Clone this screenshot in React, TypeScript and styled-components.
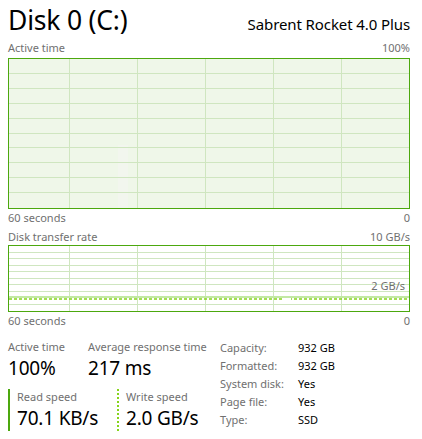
import { Fragment } from "react";
import styled, { createGlobalStyle } from "styled-components";

const GlobalStyle = createGlobalStyle`
  html, body {
    margin: 0;
    padding: 0;
    background: #ffffff;
  }
  body {
    font-family: "Noto Sans", "Open Sans", sans-serif;
    color: #000000;
  }
`;

const GREEN = "#4ca80e";
const LIME = "#86d41c";
const GRID = "#cfe6c0";

const Page = styled.div`
  width: 422px;
  height: 439px;
  box-sizing: border-box;
  padding: 0 12px 0 8px;
  overflow: hidden;
`;

const Header = styled.div`
  display: flex;
  justify-content: space-between;
  align-items: baseline;
  height: 40px;
`;

const Title = styled.h1`
  margin: 0;
  font-size: 26.5px;
  font-weight: 400;
  line-height: 40px;
  letter-spacing: -0.2px;
`;

const Model = styled.div`
  font-size: 15px;
  letter-spacing: -0.1px;
`;

const AxisRow = styled.div<{ $gapTop?: number; $gapBottom?: number }>`
  display: flex;
  justify-content: space-between;
  font-size: 11px;
  line-height: 16px;
  color: #707070;
  margin-top: ${(p) => p.$gapTop ?? 0}px;
  margin-bottom: ${(p) => p.$gapBottom ?? 0}px;
`;

const ChartFrame = styled.div<{ $h: number; $filled?: boolean }>`
  position: relative;
  height: ${(p) => p.$h}px;
  box-sizing: border-box;
  border: 1px solid ${GREEN};
  background: ${(p) => (p.$filled ? "#eff7e9" : "#ffffff")};
  svg {
    display: block;
  }
`;

const ScaleTag = styled.span`
  position: absolute;
  right: 4px;
  top: 33px;
  font-size: 11px;
  line-height: 14px;
  color: #707070;
`;

const Stats = styled.div`
  display: grid;
  grid-template-columns: 212px 1fr;
  margin-top: 10px;
`;

const LeftStats = styled.div`
  display: flex;
  flex-direction: column;
`;

const StatLine = styled.div<{ $gapTop?: number }>`
  display: flex;
  margin-top: ${(p) => p.$gapTop ?? 0}px;
`;

const Stat = styled.div<{ $w?: number; $edge?: "solid" | "dotted" }>`
  width: ${(p) => (p.$w ? `${p.$w}px` : "auto")};
  box-sizing: border-box;
  ${(p) =>
    p.$edge
      ? `border-left: 2px ${p.$edge} ${p.$edge === "solid" ? GREEN : LIME}; padding-left: 7px;`
      : ""}
`;

const StatLabel = styled.div`
  font-size: 11px;
  line-height: 16px;
  color: #707070;
`;

const StatValue = styled.div`
  font-size: 19px;
  line-height: 26px;
  letter-spacing: -0.2px;
`;

const Props = styled.div`
  display: grid;
  grid-template-columns: 78px 1fr;
  grid-auto-rows: 18px;
  font-size: 11px;
  line-height: 18px;
`;

const PropKey = styled.span`
  color: #707070;
`;

const PropVal = styled.span`
  color: #000000;
`;

const W = 400;

function Grid({ h, rows }: { h: number; rows: number }) {
  const xs = [60, 128, 196, 264, 332];
  const ys = Array.from({ length: rows - 1 }, (_, i) => Math.round(((i + 1) * h) / rows) - 0.5);
  return (
    <>
      {ys.map((y) => (
        <line key={"h" + y} x1={0} x2={W} y1={y} y2={y} stroke={GRID} strokeWidth={1} />
      ))}
      {xs.map((x) => (
        <line key={"v" + x} x1={x + 0.5} x2={x + 0.5} y1={0} y2={h} stroke={GRID} strokeWidth={1} />
      ))}
    </>
  );
}

function ActiveChart() {
  const h = 149;
  return (
    <ChartFrame $h={151} $filled>
      <svg width={W} height={h}>
        <rect x={109} y={86} width={10} height={63} fill="#f2f6ee" />
        <Grid h={h} rows={10} />
      </svg>
    </ChartFrame>
  );
}

function TransferChart() {
  const h = 65;
  return (
    <ChartFrame $h={67}>
      <svg width={W} height={h}>
        <Grid h={h} rows={10} />
        <rect x={0} y={50} width={W} height={2} fill="#c2e8a4" />
        <line
          x1={0}
          x2={W}
          y1={53}
          y2={53}
          stroke={LIME}
          strokeWidth={1.5}
          strokeDasharray="3 2"
        />
        <rect x={273} y={52} width={9} height={3} fill="#ffffff" />
      </svg>
      <ScaleTag>2 GB/s</ScaleTag>
    </ChartFrame>
  );
}

const props: [string, string][] = [
  ["Capacity:", "932 GB"],
  ["Formatted:", "932 GB"],
  ["System disk:", "Yes"],
  ["Page file:", "Yes"],
  ["Type:", "SSD"],
];

export default function App() {
  return (
    <>
      <GlobalStyle />
      <Page>
        <Header>
          <Title>Disk 0 (C:)</Title>
          <Model>Sabrent Rocket 4.0 Plus</Model>
        </Header>
        <AxisRow $gapBottom={2}>
          <span>Active time</span>
          <span>100%</span>
        </AxisRow>
        <ActiveChart />
        <AxisRow $gapTop={1}>
          <span>60 seconds</span>
          <span>0</span>
        </AxisRow>
        <AxisRow $gapTop={3}>
          <span>Disk transfer rate</span>
          <span>10 GB/s</span>
        </AxisRow>
        <TransferChart />
        <AxisRow $gapTop={1}>
          <span>60 seconds</span>
          <span>0</span>
        </AxisRow>
        <Stats>
          <LeftStats>
            <StatLine>
              <Stat $w={80}>
                <StatLabel>Active time</StatLabel>
                <StatValue>100%</StatValue>
              </Stat>
              <Stat>
                <StatLabel>Average response time</StatLabel>
                <StatValue>217 ms</StatValue>
              </Stat>
            </StatLine>
            <StatLine $gapTop={8}>
              <Stat $w={109} $edge="solid">
                <StatLabel>Read speed</StatLabel>
                <StatValue>70.1 KB/s</StatValue>
              </Stat>
              <Stat $edge="dotted">
                <StatLabel>Write speed</StatLabel>
                <StatValue>2.0 GB/s</StatValue>
              </Stat>
            </StatLine>
          </LeftStats>
          <Props>
            {props.map(([k, v]) => (
              <Fragment key={k}>
                <PropKey>{k}</PropKey>
                <PropVal>{v}</PropVal>
              </Fragment>
            ))}
          </Props>
        </Stats>
      </Page>
    </>
  );
}
